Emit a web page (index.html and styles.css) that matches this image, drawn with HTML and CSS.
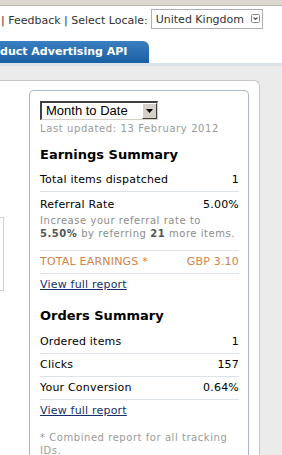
FILE: index.html
```html
<!DOCTYPE html>
<html>
<head>
<meta charset="utf-8">
<link rel="stylesheet" href="styles.css">
</head>
<body>
<div class="topbar"></div>
<div class="util">
  <span class="utext">| <a class="ulink">Feedback</a> | Select Locale:</span>
  <div class="locale">
    <span class="locale-val">United Kingdom</span>
    <svg class="locale-arrow" width="9" height="9" viewBox="0 0 9 9"><rect x="0.5" y="0.5" width="8" height="8" rx="1" fill="#fff" stroke="#8a8a8a"/><path d="M2.5 3.5 L4.5 5.5 L6.5 3.5" fill="none" stroke="#555" stroke-width="1.2"/></svg>
  </div>
</div>
<div class="tabs"><div class="tab">Product Advertising API</div></div>
<div class="tabline"></div>
<div class="stage">
  <div class="outer">
    <div class="leftcol"><div class="sidebox"></div></div>
    <div class="inner">
      <div class="period">
        <span class="period-val">Month to Date</span>
        <span class="period-btn"><svg width="8" height="5" viewBox="0 0 8 5"><path d="M0 0 H7 L3.5 4 Z" fill="#000"/></svg></span>
      </div>
      <div class="updated">Last updated: 13 February 2012</div>

      <h3 class="heading">Earnings Summary</h3>
      <div class="row"><span>Total items dispatched</span><span>1</span></div>
      <div class="row row-ref">
        <div class="row-line"><span>Referral Rate</span><span>5.00%</span></div>
        <div class="note">Increase your referral rate to<br><b>5.50%</b> by referring <b>21</b> more items.</div>
      </div>
      <div class="row row-total"><span>TOTAL EARNINGS *</span><span>GBP 3.10</span></div>
      <a class="report">View full report</a>

      <h3 class="heading heading-orders">Orders Summary</h3>
      <div class="row"><span>Ordered items</span><span>1</span></div>
      <div class="row"><span>Clicks</span><span>157</span></div>
      <div class="row"><span>Your Conversion</span><span>0.64%</span></div>
      <a class="report">View full report</a>

      <div class="foot">* Combined report for all tracking<br>IDs.</div>
    </div>
  </div>
</div>
</body>
</html>
```
FILE: styles.css
```css
html, body {
  margin: 0;
  padding: 0;
  background: #fff;
  overflow: hidden;
}
body {
  font-family: "DejaVu Sans", Verdana, sans-serif;
  font-size: 11px;
  color: #000;
  height: 455px;
}
.topbar {
  height: 5px;
  background: #dcd8d0;
  border-bottom: 1px solid #bdb9b1;
}
.util {
  height: 35px;
  box-sizing: border-box;
  padding: 3px 0 0 1px;
  display: flex;
  align-items: flex-start;
  color: #333;
  white-space: nowrap;
}
.utext {
  line-height: 20px;
  padding-top: 2px;
}
.ulink {
  color: #333;
}
.locale {
  margin-left: 3px;
  width: 112px;
  height: 20px;
  box-sizing: border-box;
  border: 1px solid #a9afb5;
  display: flex;
  align-items: center;
  padding-left: 4px;
  padding-right: 2px;
}
.locale-val {
  flex: 1;
  line-height: 18px;
  padding-top: 2px;
}
.locale-arrow {
  display: block;
  margin-top: -1px;
}
.tabs {
  height: 22px;
  display: flex;
}
.tab {
  margin-left: -31px;
  padding: 0 22px 0 10px;
  height: 22px;
  line-height: 22px;
  background: linear-gradient(#3a7fc2, #1b5fa3);
  color: #fff;
  font-weight: bold;
  font-size: 11px;
  border-radius: 0 6px 0 0;
  white-space: nowrap;
}
.tabline {
  height: 3px;
  background: #dae2ea;
}
.stage {
  background: #ebebeb;
  padding-top: 14px;
  height: 600px;
}
.outer {
  margin-right: 22px;
  border-top: 1px solid #c6c6c6;
  border-right: 1px solid #c6c6c6;
  border-radius: 0 6px 0 0;
  background: #fff;
  display: flex;
  height: 600px;
}
.leftcol {
  width: 29px;
  flex: none;
}
.sidebox {
  width: 3px;
  height: 72px;
  margin-top: 136px;
  border: 1px solid #d2d2d2;
  border-left: none;
}
.inner {
  margin-top: 9px;
  width: 220px;
  box-sizing: border-box;
  flex: none;
  border: 1px solid #aab9c7;
  border-bottom: none;
  border-radius: 5px 5px 0 0;
  padding: 10px 9px 0 10px;
  letter-spacing: 0.2px;
}
.period {
  display: flex;
  width: 118px;
  height: 19px;
  box-sizing: border-box;
  border-style: solid;
  border-width: 2px 1px 1px 2px;
  border-color: #404040 #d4d0c8 #d4d0c8 #404040;
  background: #fff;
  font-family: "Liberation Sans", Arial, sans-serif;
  font-size: 13px;
  letter-spacing: 0;
}
.period-val {
  flex: 1;
  line-height: 16px;
  padding-left: 4px;
}
.period-btn {
  width: 15px;
  box-sizing: border-box;
  background: #d4d0c8;
  border-style: solid;
  border-width: 1px;
  border-color: #fff #404040 #404040 #fff;
  display: flex;
  align-items: center;
  justify-content: center;
}
.period-btn svg {
  display: block;
}
.updated {
  margin-top: 3px;
  font-size: 10px;
  line-height: 12px;
  color: #9a9a9a;
  letter-spacing: 0.6px;
}
.heading {
  margin: 12px 0 6px;
  font-size: 13px;
  line-height: 16px;
  font-weight: bold;
  letter-spacing: 0;
}
.heading-orders {
  margin-top: 16px;
  margin-bottom: 7px;
}
.row {
  display: flex;
  justify-content: space-between;
  padding: 4px 0;
  line-height: 14px;
  border-bottom: 1px solid #dbe2e8;
}
.row-ref {
  display: block;
  padding: 6px 0 10px;
}
.row-line {
  display: flex;
  justify-content: space-between;
}
.note {
  margin-top: 2px;
  font-size: 10px;
  line-height: 13px;
  color: #8c8c8c;
  letter-spacing: 0.55px;
}
.note b {
  color: #555;
}
.row-total {
  color: #d0844a;
}
.report {
  display: block;
  margin-top: 4px;
  line-height: 14px;
  color: #16306e;
  text-decoration: underline;
}
.foot {
  margin-top: 13px;
  font-size: 10px;
  line-height: 13px;
  color: #9a9a9a;
  letter-spacing: 0.55px;
}
```
